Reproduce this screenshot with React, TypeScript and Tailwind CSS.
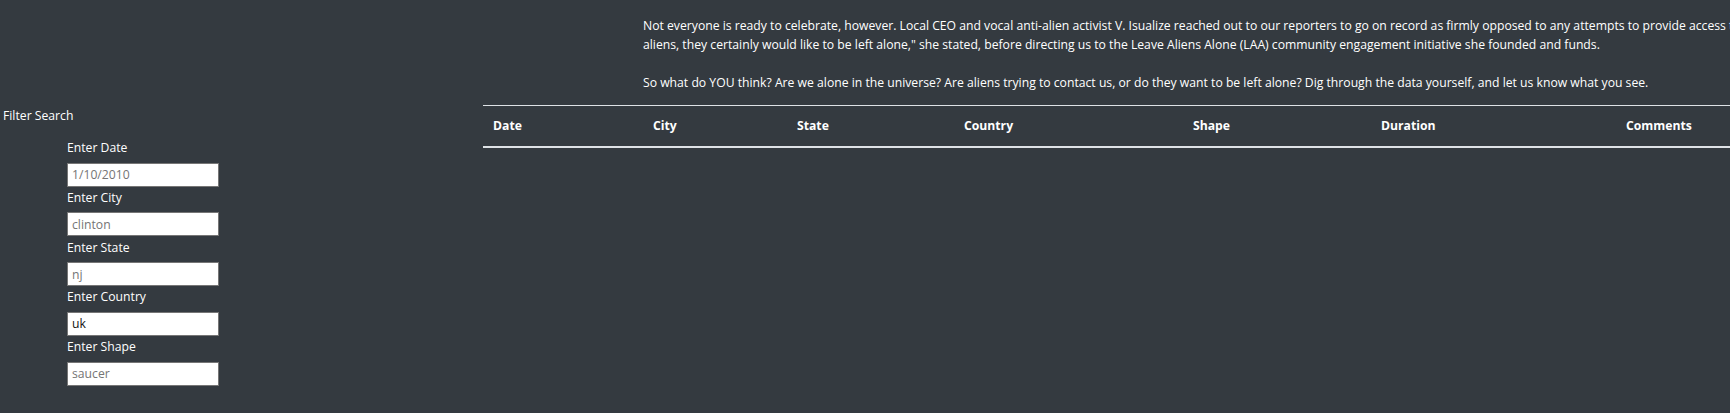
import { useState } from "react";

const filters = [
  { label: "Enter Date", placeholder: "1/10/2010", value: "" },
  { label: "Enter City", placeholder: "clinton", value: "" },
  { label: "Enter State", placeholder: "nj", value: "" },
  { label: "Enter Country", placeholder: "us", value: "uk" },
  { label: "Enter Shape", placeholder: "saucer", value: "" },
];

const columns = [
  { name: "Date", w: "w-[160px]" },
  { name: "City", w: "w-[144px]" },
  { name: "State", w: "w-[167px]" },
  { name: "Country", w: "w-[229px]" },
  { name: "Shape", w: "w-[188px]" },
  { name: "Duration", w: "w-[245px]" },
  { name: "Comments", w: "w-[220px]" },
];

export default function App() {
  const [values, setValues] = useState(filters.map((f) => f.value));

  return (
    <div className="w-[1730px] h-[413px] overflow-hidden bg-[#343a40] text-white font-['Open_Sans',sans-serif] text-[12.2px] leading-[19.5px]">
      {/* Article text */}
      <div className="pl-[643px] pt-[15.5px] whitespace-nowrap">
        <p className="mb-[18px]">
          <span className="block">
            Not everyone is ready to celebrate, however. Local CEO and vocal anti-alien activist V. Isualize reached out to our reporters to go on record as firmly opposed to any attempts to provide access to alien sighting data. "If there are
          </span>
          <span className="block">
            aliens, they certainly would like to be left alone," she stated, before directing us to the Leave Aliens Alone (LAA) community engagement initiative she founded and funds.
          </span>
        </p>
        <p className="mb-[13px]">
          So what do YOU think? Are we alone in the universe? Are aliens trying to contact us, or do they want to be left alone? Dig through the data yourself, and let us know what you see.
        </p>
      </div>

      <div className="flex">
        {/* Filter sidebar */}
        <aside className="w-[483px] shrink-0 pt-[1px]">
          <h5 className="pl-[3px] mb-[12.5px]">Filter Search</h5>
          <ul className="pl-[67px]">
            {filters.map((f, i) => (
              <li key={f.label} className="mb-[1.25px]">
                <label className="block">{f.label}</label>
                <input
                  className="mt-[5px] block w-[152px] h-[24px] bg-white border border-[#767676] px-[4px] text-[12.2px] text-[#111] placeholder:text-[#757575] outline-none"
                  placeholder={f.placeholder}
                  value={values[i]}
                  onChange={(e) => {
                    const next = [...values];
                    next[i] = e.target.value;
                    setValues(next);
                  }}
                />
              </li>
            ))}
          </ul>
        </aside>

        {/* Results table */}
        <div className="min-w-0">
          <table className="table-fixed border-collapse w-[1353px]">
            <thead>
              <tr>
                {columns.map((c) => (
                  <th
                    key={c.name}
                    className={`${c.w} text-left font-bold px-[10px] h-[41px] border-t border-b-2 border-[#dee2e6]`}
                  >
                    {c.name}
                  </th>
                ))}
              </tr>
            </thead>
            <tbody></tbody>
          </table>
        </div>
      </div>
    </div>
  );
}
